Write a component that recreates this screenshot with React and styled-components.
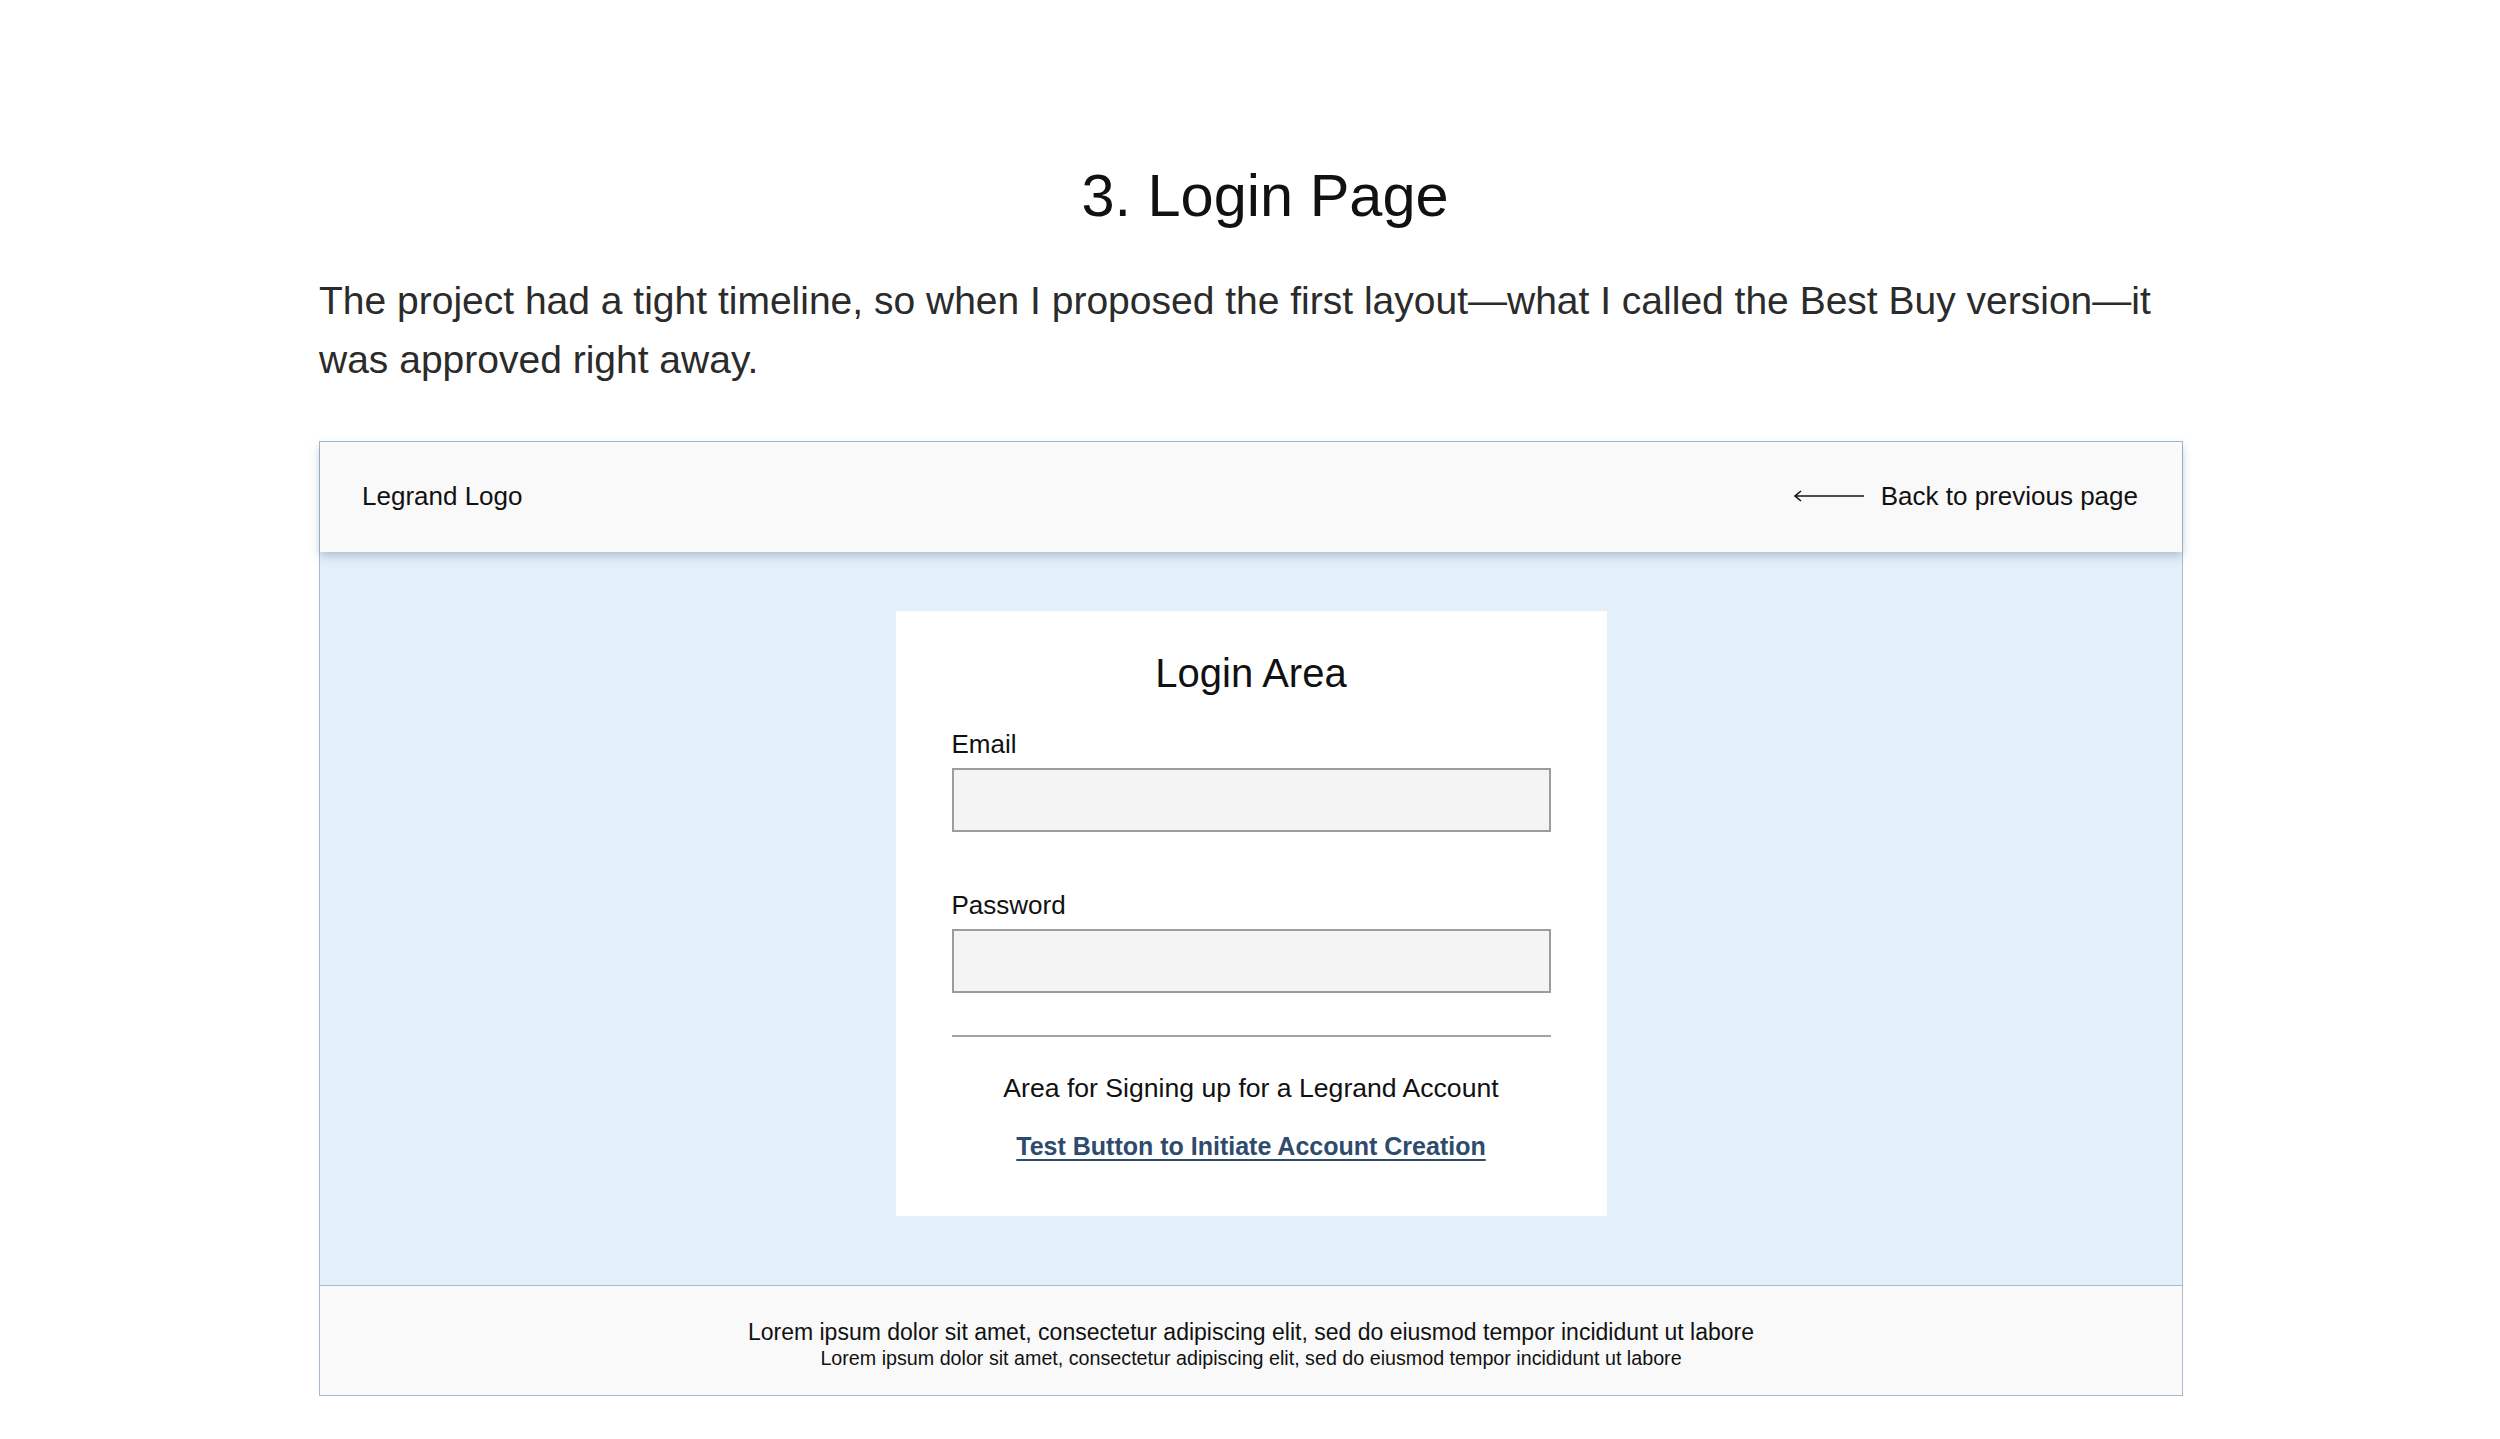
import React from "react";
import styled, { createGlobalStyle } from "styled-components";

const GlobalStyle = createGlobalStyle`
  html, body {
    margin: 0;
    padding: 0;
    background: #ffffff;
  }
  body {
    font-family: "Liberation Sans", Arial, Helvetica, sans-serif;
    color: #111111;
  }
  * {
    box-sizing: border-box;
  }
`;

const Page = styled.div`
  width: 1864px;
  margin-left: 319px;
  padding-top: 161px;
  padding-bottom: 40px;
`;

const Title = styled.h1`
  margin: 0;
  padding-left: 28px;
  font-size: 59.5px;
  line-height: 70px;
  font-weight: 400;
  text-align: center;
  color: #111111;
`;

const Intro = styled.p`
  margin: 40px 0 0;
  font-size: 39px;
  line-height: 59px;
  color: #2b2b2b;
`;

const Wireframe = styled.div`
  margin-top: 52px;
  border: 1px solid #a7b9cc;
  display: flex;
  flex-direction: column;
  background: #e3f0f9;
`;

const Header = styled.header`
  position: relative;
  z-index: 1;
  height: 110px;
  padding: 0 44px 2px 42px;
  display: flex;
  align-items: center;
  justify-content: space-between;
  background: #f9f9f9;
  box-shadow: 0 4px 9px rgba(70, 100, 140, 0.35);
  font-size: 26px;
`;

const BackLink = styled.div`
  display: flex;
  align-items: center;
  gap: 16px;
`;

const Main = styled.main`
  display: flex;
  justify-content: center;
  padding: 59px 0 69px;
`;

const Card = styled.section`
  width: 711px;
  background: #ffffff;
  padding: 38px 56px 55px;
  display: flex;
  flex-direction: column;
`;

const CardTitle = styled.h2`
  margin: 0 0 32px;
  font-size: 40px;
  line-height: 48px;
  font-weight: 400;
  text-align: center;
`;

const Label = styled.label`
  display: block;
  font-size: 26px;
  line-height: 31px;
  margin-bottom: 8px;
`;

const Input = styled.div`
  height: 64px;
  background: #f4f4f4;
  border: 2px solid #9c9c9c;
  margin-bottom: ${(p) => p.$gap}px;
`;

const Divider = styled.hr`
  margin: 0 0 36px;
  border: 0;
  border-top: 2px solid #a3a3a3;
`;

const SignupText = styled.p`
  margin: 0 0 27px;
  font-size: 26.6px;
  line-height: 31px;
  text-align: center;
`;

const CreateLink = styled.a`
  align-self: center;
  font-size: 25px;
  line-height: 30px;
  font-weight: 700;
  color: #2e4b6e;
  text-decoration: underline;
  text-decoration-thickness: 2px;
  text-underline-offset: 4px;
`;

const Footer = styled.footer`
  height: 110px;
  padding-top: 6px;
  border-top: 1px solid #a7b9cc;
  background: #f9f9f9;
  display: flex;
  flex-direction: column;
  align-items: center;
  justify-content: center;
`;

const FooterLine = styled.div`
  font-size: ${(p) => p.$size}px;
  line-height: ${(p) => p.$lh}px;
  color: #111111;
`;

const ArrowLeft = () => (
  <svg width="72" height="14" viewBox="0 0 72 14" fill="none">
    <path d="M2 7H71" stroke="#111" strokeWidth="1.6" />
    <path d="M8 2L2 7L8 12" stroke="#111" strokeWidth="1.6" />
  </svg>
);

const lorem =
  "Lorem ipsum dolor sit amet, consectetur adipiscing elit, sed do eiusmod tempor incididunt ut labore";

export default function App() {
  return (
    <>
      <GlobalStyle />
      <Page>
        <Title>3. Login Page</Title>
        <Intro>
          The project had a tight timeline, so when I proposed the first
          layout—what I called the Best Buy version—it was approved right away.
        </Intro>
        <Wireframe>
          <Header>
            <span>Legrand Logo</span>
            <BackLink>
              <ArrowLeft />
              <span>Back to previous page</span>
            </BackLink>
          </Header>
          <Main>
            <Card>
              <CardTitle>Login Area</CardTitle>
              <Label>Email</Label>
              <Input $gap={58} />
              <Label>Password</Label>
              <Input $gap={42} />
              <Divider />
              <SignupText>Area for Signing up for a Legrand Account</SignupText>
              <CreateLink href="#">Test Button to Initiate Account Creation</CreateLink>
            </Card>
          </Main>
          <Footer>
            <FooterLine $size={23} $lh={28}>
              {lorem}
            </FooterLine>
            <FooterLine $size={19.7} $lh={24}>
              {lorem}
            </FooterLine>
          </Footer>
        </Wireframe>
      </Page>
    </>
  );
}
